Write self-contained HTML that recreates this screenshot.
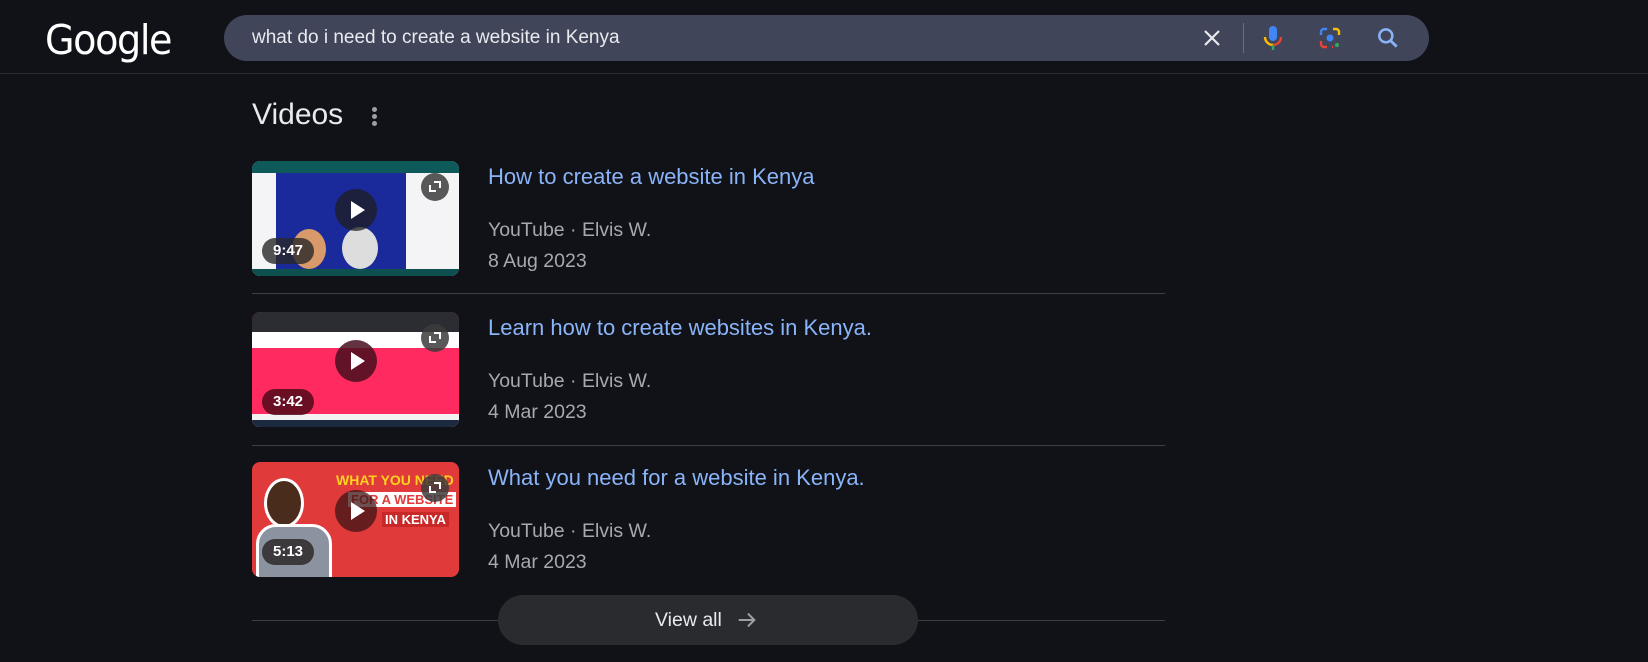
<!DOCTYPE html>
<html><head><meta charset="utf-8"><style>
*{margin:0;padding:0;box-sizing:border-box}
body{width:1648px;height:662px;background:#101218;font-family:"Liberation Sans",Arial,sans-serif;position:relative;overflow:hidden}
.abs{position:absolute}
.logo{left:45px;top:16px;font-size:41px;color:#fff;letter-spacing:-1.5px;font-family:"DejaVu Sans","Liberation Sans",sans-serif;font-weight:normal;transform:scaleX(0.93);transform-origin:left}
.bar{left:224px;top:15px;width:1205px;height:46px;border-radius:23px;background:#40455a}
.q{left:252px;top:27px;font-size:19px;color:#e8eaed}
.hline{left:0;top:73px;width:1648px;height:1px;background:#2c2e33}
.vid{left:252px;top:98px;font-size:30px;color:#e8eaed}
.dot{width:5px;height:5px;border-radius:50%;background:#9aa0a6;left:372px}
.thumb{left:252px;width:207px;height:115px;border-radius:8px;overflow:hidden}
.play{position:absolute;left:83px;top:28px;width:42px;height:42px;border-radius:50%;background:rgba(30,30,30,.75)}
.play:after{content:"";position:absolute;left:16px;top:12px;border-left:14px solid #fff;border-top:9px solid transparent;border-bottom:9px solid transparent}
.dur{position:absolute;left:10px;bottom:12px;height:26px;padding:0 11px;border-radius:13px;background:rgba(40,40,40,.8);color:#fff;font-weight:bold;font-size:15px;line-height:26px}
.exp{position:absolute;right:10px;top:12px;width:28px;height:28px;border-radius:50%;background:rgba(60,60,60,.85)}
.exp:before{content:"";position:absolute;left:8px;top:12px;width:5px;height:5px;border-left:2px solid #fff;border-bottom:2px solid #fff}
.exp:after{content:"";position:absolute;left:13px;top:8px;width:5px;height:5px;border-right:2px solid #fff;border-top:2px solid #fff}
.t{left:488px;font-size:22px;color:#8ab4f8}
.m{left:488px;font-size:19.5px;color:#a6a9ae}
.sep{left:252px;width:913px;height:1px;background:#3c4043}
</style></head><body>
<div class="abs logo">Google</div>
<div class="abs bar"></div>
<div class="abs q">what do i need to create a website in Kenya</div>
<svg class="abs" style="left:1200px;top:26px" width="24" height="24" viewBox="0 0 24 24"><path d="M5 5L19 19M19 5L5 19" stroke="#e8eaed" stroke-width="2.2"/></svg>
<div class="abs" style="left:1243px;top:23px;width:1px;height:30px;background:#6b6f7c"></div>
<svg class="abs" style="left:1261px;top:24px" width="24" height="30" viewBox="0 0 24 30"><rect x="8" y="2" width="8" height="15" rx="4" fill="#4285f4"/><path d="M4 13a8 8 0 0 0 8 8" stroke="#fbbc04" stroke-width="2.4" fill="none"/><path d="M20 13a8 8 0 0 1-8 8" stroke="#ea4335" stroke-width="2.4" fill="none"/><path d="M12 21v5" stroke="#34a853" stroke-width="2.4"/></svg>
<svg class="abs" style="left:1318px;top:26px" width="24" height="24" viewBox="0 0 24 24"><path d="M3 9V6a3 3 0 0 1 3-3h3" stroke="#4285f4" stroke-width="2.4" fill="none"/><path d="M15 3h3a3 3 0 0 1 3 3v3" stroke="#fbbc04" stroke-width="2.4" fill="none"/><path d="M3 15v3a3 3 0 0 0 3 3h3" stroke="#ea4335" stroke-width="2.4" fill="none"/><path d="M14 21h1" stroke="#ea4335" stroke-width="2.4"/><circle cx="12" cy="12" r="3.5" fill="#4285f4"/><circle cx="19" cy="19" r="2" fill="#34a853"/></svg>
<svg class="abs" style="left:1375px;top:25px" width="26" height="26" viewBox="0 0 24 24"><circle cx="10" cy="10" r="6" stroke="#8ab4f8" stroke-width="2.3" fill="none"/><path d="M14.5 14.5L20 20" stroke="#8ab4f8" stroke-width="2.6"/></svg>
<div class="abs hline"></div>
<div class="abs vid">Videos</div>
<div class="abs dot" style="top:107px"></div><div class="abs dot" style="top:114px"></div><div class="abs dot" style="top:121px"></div>

<div class="abs thumb" style="top:161px;background:#f4f4f6">
<div class="abs" style="left:0;top:0;width:207px;height:12px;background:#0e5a5a"></div>
<div class="abs" style="left:24px;top:12px;width:130px;height:98px;background:#1b2a9a"></div>
<div class="abs" style="left:40px;top:68px;width:34px;height:40px;border-radius:50%;background:#d89a6a"></div>
<div class="abs" style="left:90px;top:66px;width:36px;height:42px;border-radius:50%;background:#ddd"></div>
<div class="abs" style="left:0;top:108px;width:207px;height:7px;background:#0e5050"></div>
<div class="play"></div><div class="exp"></div><div class="dur">9:47</div></div>
<div class="abs t" style="top:164px">How to create a website in Kenya</div>
<div class="abs m" style="top:219px">YouTube · Elvis W.</div>
<div class="abs m" style="top:250px">8 Aug 2023</div>
<div class="abs sep" style="top:293px"></div>

<div class="abs thumb" style="top:312px;background:#ff2a5f">
<div class="abs" style="left:0;top:0;width:207px;height:20px;background:#2b2d33"></div>
<div class="abs" style="left:0;top:20px;width:207px;height:16px;background:#fff"></div>
<div class="abs" style="left:0;top:102px;width:207px;height:13px;background:#f2f2f2"></div>
<div class="abs" style="left:0;top:108px;width:207px;height:7px;background:#1c2a40"></div>
<div class="play" style="background:rgba(70,15,30,.85)"></div><div class="exp"></div><div class="dur" style="background:rgba(80,10,25,.85)">3:42</div></div>
<div class="abs t" style="top:315px">Learn how to create websites in Kenya.</div>
<div class="abs m" style="top:370px">YouTube · Elvis W.</div>
<div class="abs m" style="top:401px">4 Mar 2023</div>
<div class="abs sep" style="top:445px"></div>

<div class="abs thumb" style="top:462px;background:#e13a3a">
<div class="abs" style="left:12px;top:16px;width:40px;height:50px;border-radius:50%;background:#4a2c1c;border:3px solid #fff"></div>
<div class="abs" style="left:4px;top:62px;width:76px;height:60px;border-radius:20px 20px 0 0;background:#8b93a0;border:3px solid #fff"></div>
<div class="abs" style="left:84px;top:10px;font-weight:bold;color:#ffd21f;font-size:14px">WHAT YOU NEED</div>
<div class="abs" style="left:96px;top:30px;font-weight:bold;color:#e13a3a;font-size:13px;background:#fff;padding:0 3px">FOR A WEBSITE</div>
<div class="abs" style="left:130px;top:50px;font-weight:bold;color:#fff;font-size:13px;background:#c82828;padding:0 3px">IN KENYA</div>
<div class="play" style="background:rgba(60,20,20,.75)"></div><div class="exp"></div><div class="dur" style="background:rgba(40,35,35,.8)">5:13</div></div>
<div class="abs t" style="top:465px">What you need for a website in Kenya.</div>
<div class="abs m" style="top:520px">YouTube · Elvis W.</div>
<div class="abs m" style="top:551px">4 Mar 2023</div>
<div class="abs sep" style="top:620px"></div>

<div class="abs" style="left:498px;top:595px;width:420px;height:50px;border-radius:25px;background:#2a2b2f"></div>
<div class="abs" style="left:655px;top:609px;font-size:19.5px;color:#e8eaed">View all</div>
<svg class="abs" style="left:736px;top:609px" width="22" height="22" viewBox="0 0 24 24"><path d="M3 12H20M13 5l7 7-7 7" stroke="#9aa0a6" stroke-width="2.2" fill="none"/></svg>
</body></html>
